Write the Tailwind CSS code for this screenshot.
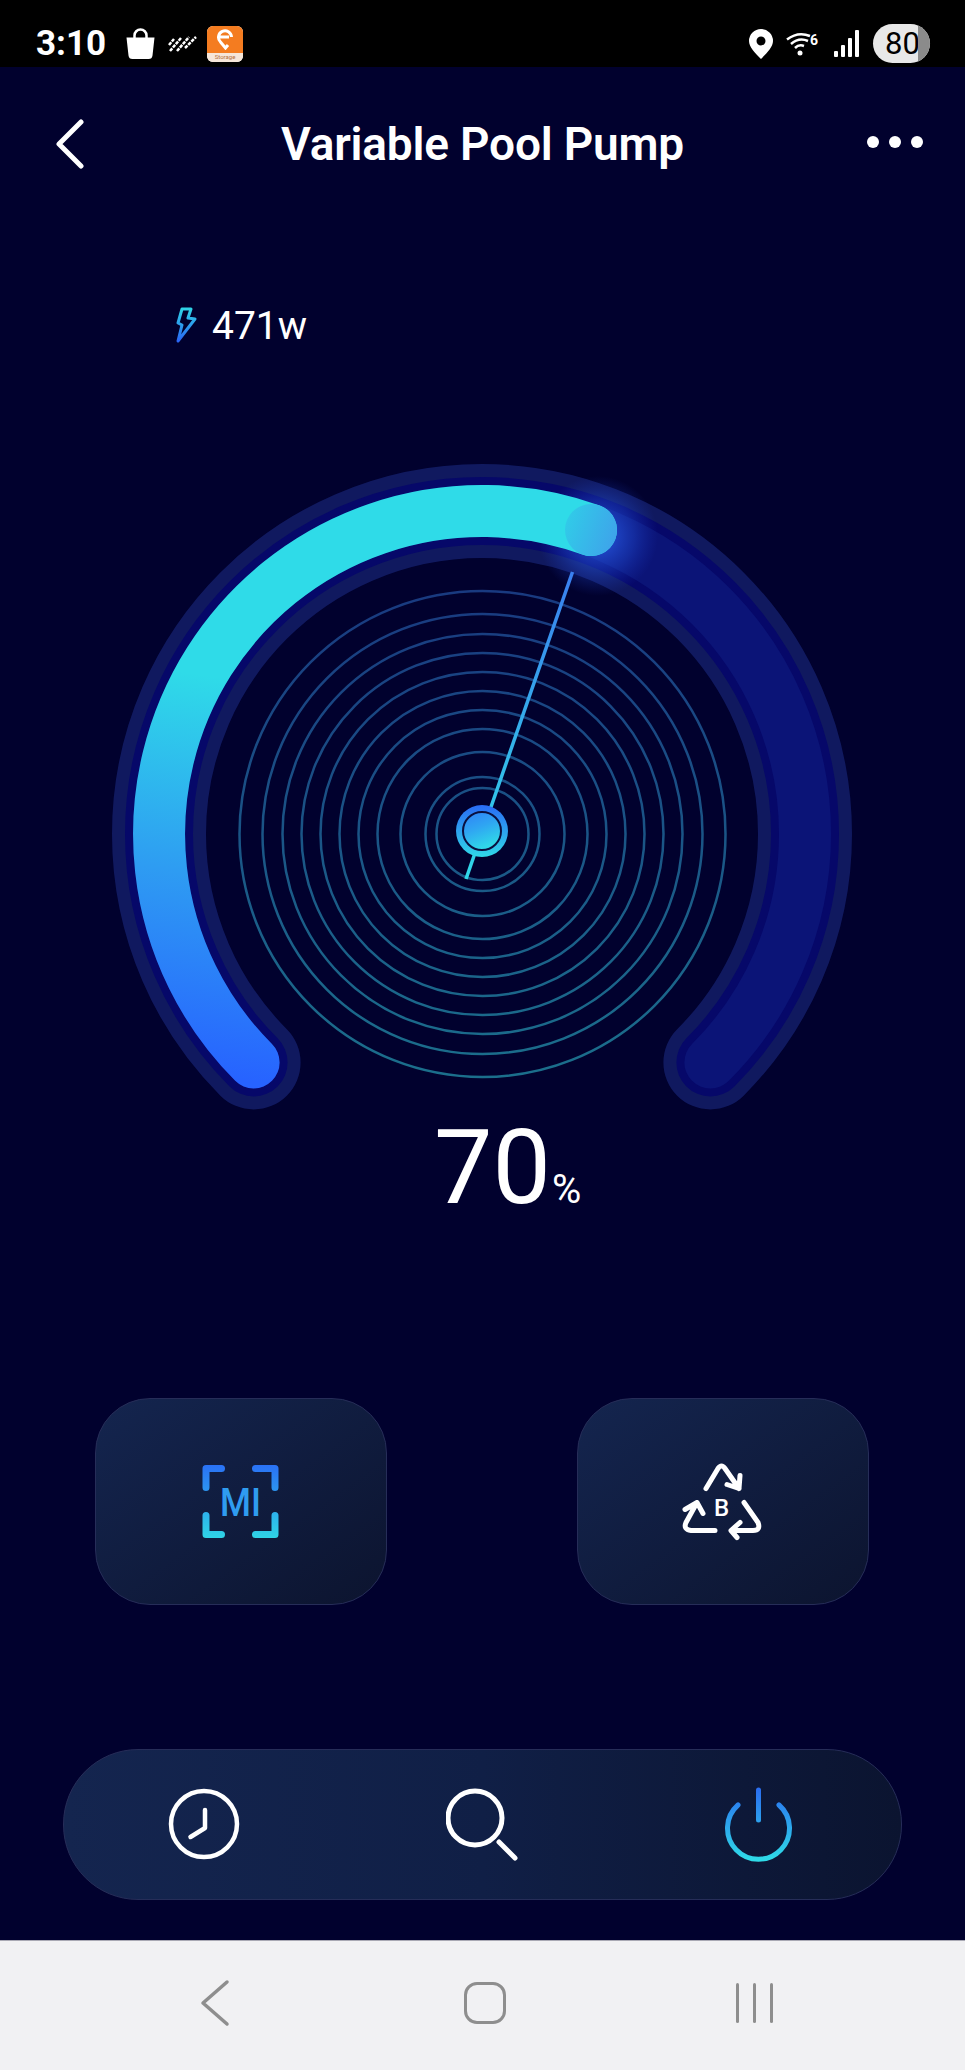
<!DOCTYPE html>
<html>
<head>
<meta charset="utf-8">
<script src="https://cdn.jsdelivr.net/npm/@tailwindcss/browser@4"></script>
</head>
<body class="bg-[#01012e]">
<div class="w-[965px] h-[2070px] overflow-hidden flex flex-col bg-[#01012e] text-white [font-family:Roboto,sans-serif]">

  <!-- status bar -->
  <div class="h-[67px] shrink-0 bg-black flex items-center pt-[20px]">
    <span class="ml-[36px] text-[35px] font-bold leading-none w-[89px]">3:10</span>
    <svg class="w-[31px] h-[32px]" viewBox="0 0 30 32"><path d="M9 10V7.500a6 6 0 0 1 12 0V10" fill="none" stroke="#fff" stroke-width="2.500"/><path d="M1 9.500h28l-2 18a4 4 0 0 1-4 3.500H7a4 4 0 0 1-4-3.500z" fill="#fff"/></svg>
    <svg class="ml-[12px] w-[30px] h-[16px]" viewBox="0 0 30 16" stroke="#fff" stroke-width="2.500" stroke-dasharray="3.500 1"><path d="M1 9 L6 3M2 15 L13 2M9 15 L21 1M17 12 L28 1"/></svg>
    <div class="ml-[9px] w-[36px] h-[36px] rounded-[6px] overflow-hidden flex flex-col bg-white">
      <div class="h-[27px] bg-[#f47c20] flex items-center justify-center">
        <svg class="w-[18px] h-[21px]" viewBox="0 0 18 21" fill="none" stroke="#fff" stroke-width="3"><path d="M3 8h10M15.500 8a6.500 6.500 0 1 0-11 5l5 6 2.500-3"/></svg>
      </div>
      <div class="flex-1 flex items-center justify-center bg-[#f6e6da]"><span class="text-[6px] leading-none text-[#b5703a]">Storage</span></div>
    </div>

    <svg class="ml-auto w-[24px] h-[30px]" viewBox="0 0 24 30"><path fill-rule="evenodd" d="M12 0a12 12 0 0 1 12 12c0 6-6 12-12 18C6 24 0 18 0 12A12 12 0 0 1 12 0zm0 7.500a4.500 4.500 0 1 0 0 9 4.500 4.500 0 0 0 0-9z" fill="#fff"/></svg>
    <svg class="ml-[13px] w-[33px] h-[25px]" viewBox="0 0 33 25" fill="none" stroke="#fff" stroke-width="2.500"><path d="M1 8.500Q12 0 24 5M5 13Q13 6 22 10M9 17Q13 13 18 15"/><circle cx="14" cy="22" r="2.500" fill="#fff" stroke="none"/><text x="24" y="14" font-size="14" font-weight="700" fill="#fff" stroke="none" font-family="Roboto, sans-serif">6</text></svg>
    <svg class="ml-[15px] w-[26px] h-[27px]" viewBox="0 0 26 27" fill="#fff"><rect x="0" y="21" width="4" height="6" rx="1"/><rect x="7" y="15" width="4" height="12" rx="1"/><rect x="14" y="8" width="4" height="19" rx="1"/><rect x="21" y="0" width="4" height="27" rx="1"/></svg>
    <div class="ml-[13px] mr-[35px] w-[57px] h-[39px] rounded-full overflow-hidden bg-[#e8e8e8] flex">
      <span class="text-black text-[31px] leading-[39px] pl-[12px] w-[45px]">80</span>
      <div class="flex-1 bg-[#8b8b8b]"></div>
    </div>
  </div>

  <!-- header -->
  <div class="h-[154px] shrink-0 grid grid-cols-[1fr_auto_1fr] items-center">
    <svg class="ml-[54px] w-[32px] h-[50px]" viewBox="0 0 32 50" fill="none" stroke="#fff" stroke-width="5" stroke-linecap="round" stroke-linejoin="round"><path d="M27 3 L5 25 L27 47"/></svg>
    <h1 class="text-[46px] font-semibold leading-none tracking-[-0.2px]">Variable Pool Pump</h1>
    <div class="flex justify-end gap-[10px] pr-[42px] pb-[5px]">
      <span class="w-[12px] h-[12px] rounded-full bg-white"></span>
      <span class="w-[12px] h-[12px] rounded-full bg-white"></span>
      <span class="w-[12px] h-[12px] rounded-full bg-white"></span>
    </div>
  </div>

  <!-- power -->
  <div class="mt-[86px] h-[36px] shrink-0 pl-[175px] flex items-center gap-[14px]">
    <svg class="w-[23px] h-[36px]" viewBox="0 0 23 36" fill="none" stroke-width="3" stroke-linejoin="round">
      <defs><linearGradient id="b" x1="0" y1="0" x2="0" y2="1"><stop offset="0" stop-color="#2fd3e6"/><stop offset="1" stop-color="#2a66f5"/></linearGradient></defs>
      <path d="M7 2h9l-3 9 7 1L3 34l4-16-4-2z" stroke="url(#b)"/>
    </svg>
    <span class="text-[39px] leading-none pt-[2px]">471w</span>
  </div>

  <!-- gauge -->
  <svg class="block shrink-0 w-[965px] h-[757px] overflow-visible" viewBox="0 343 965 757" fill="none">
    <defs>
      <linearGradient id="band" gradientUnits="userSpaceOnUse" x1="300" y1="690" x2="240" y2="1080"><stop offset="0" stop-color="#2fdbe8"/><stop offset="0.5" stop-color="#2e9cf2"/><stop offset="1" stop-color="#2763ff"/></linearGradient>
      <linearGradient id="rings" gradientUnits="userSpaceOnUse" x1="0" y1="590" x2="0" y2="1078"><stop offset="0" stop-color="#193a80"/><stop offset="1" stop-color="#1b6f8c"/></linearGradient>
      <linearGradient id="needle" gradientUnits="userSpaceOnUse" x1="572" y1="572" x2="466" y2="879"><stop offset="0" stop-color="#3a7ff0"/><stop offset="0.5" stop-color="#35aeea"/><stop offset="1" stop-color="#30d8e8"/></linearGradient>
      <linearGradient id="hub" x1="0" y1="0" x2="0" y2="1"><stop offset="0" stop-color="#2a6cf5"/><stop offset="1" stop-color="#30d8e8"/></linearGradient>
      <linearGradient id="hub2" x1="0" y1="0" x2="0.4" y2="1"><stop offset="0" stop-color="#2f80f8"/><stop offset="0.5" stop-color="#2fa6f2"/><stop offset="1" stop-color="#30d8e8"/></linearGradient>
      <linearGradient id="cap" gradientUnits="userSpaceOnUse" x1="560" y1="515" x2="617" y2="535"><stop offset="0" stop-color="#2fd0e8"/><stop offset="1" stop-color="#3ea4ea"/></linearGradient>
      <radialGradient id="glow"><stop offset="0" stop-color="#2f6cff" stop-opacity="0.8"/><stop offset="0.6" stop-color="#2456e8" stop-opacity="0.35"/><stop offset="1" stop-color="#1d3fd0" stop-opacity="0"/></radialGradient>
    </defs>
    <path d="M253.600 1062.400A323 323 0 1 1 710.400 1062.400" stroke="#10195f" stroke-width="94" stroke-linecap="round"/>
    <path d="M253.600 1062.400A323 323 0 1 1 710.400 1062.400" stroke="#060869" stroke-width="68" stroke-linecap="round"/>
    <path d="M253.600 1062.400A323 323 0 1 1 710.400 1062.400" stroke="#0b1477" stroke-width="52" stroke-linecap="round"/>
    <circle cx="598" cy="536" r="60" fill="url(#glow)"/>
    <g stroke="url(#rings)" stroke-width="2.500">
      <circle cx="482.500" cy="834" r="243"/><circle cx="482.500" cy="834" r="220"/><circle cx="482.500" cy="834" r="200"/>
      <circle cx="482.500" cy="834" r="181"/><circle cx="482.500" cy="834" r="162"/><circle cx="482.500" cy="834" r="143"/>
      <circle cx="482.500" cy="834" r="124"/><circle cx="482.500" cy="834" r="105"/><circle cx="482.500" cy="834" r="82"/>
      <circle cx="482.500" cy="834" r="57"/><circle cx="482.500" cy="834" r="46"/>
    </g>
    <path d="M253.600 1062.400A323 323 0 0 1 591 530" stroke="url(#band)" stroke-width="52" stroke-linecap="round"/>
    <circle cx="591" cy="530" r="26" fill="url(#cap)"/>
    <path d="M572.500 572L466 879" stroke="url(#needle)" stroke-width="3.500"/>
    <circle cx="482" cy="831" r="26" fill="url(#hub)"/>
    <circle cx="482" cy="831" r="19" fill="url(#hub2)" stroke="#0a1040" stroke-width="2"/>
  </svg>

  <!-- percent -->
  <div class="mt-[16px] h-[100px] shrink-0 pl-[434px] flex items-baseline">
    <span class="text-[104px] leading-none">70</span>
    <span class="text-[40px] leading-none ml-[1px]">%</span>
  </div>

  <!-- mode buttons -->
  <div class="mt-[182px] h-[207px] shrink-0 flex justify-between pl-[95px] pr-[96px]">
    <div class="w-[292px] h-[207px] rounded-[55px] border border-[#262d58] bg-gradient-to-br from-[#14254f] to-[#0c142f] flex items-center justify-center">
      <svg class="w-[100px] h-[100px]" viewBox="191.500 1451.500 100 100" fill="none">
        <defs><linearGradient id="mi" gradientUnits="userSpaceOnUse" x1="0" y1="1465" x2="0" y2="1537"><stop offset="0" stop-color="#2a72f5"/><stop offset="1" stop-color="#2fd3e6"/></linearGradient></defs>
        <path d="M206.500 1487V1468H222M256 1468H275.500V1487M206.500 1515V1534H222M256 1534H275.500V1515" stroke="url(#mi)" stroke-width="7" stroke-linecap="round" stroke-linejoin="round"/>
        <text x="220.500" y="1515" font-size="39" font-weight="500" textLength="41" lengthAdjust="spacingAndGlyphs" fill="#2f9cf0" font-family="Roboto, sans-serif">MI</text>
      </svg>
    </div>
    <div class="w-[292px] h-[207px] rounded-[55px] border border-[#262d58] bg-gradient-to-br from-[#14254f] to-[#0c142f] flex items-center justify-center">
      <svg class="w-[100px] h-[100px]" viewBox="674 1451.500 100 100" fill="none" stroke="#fff" stroke-width="5" stroke-linecap="round" stroke-linejoin="round">
        <path d="M707 1488L719 1468Q722.500 1463 726 1468L740 1488M741 1475L740 1488L728 1484"/>
        <path d="M716 1530H692Q684 1529 687 1522L698 1502M686 1509L698 1502L704 1513"/>
        <path d="M745 1502L759 1522Q762 1530 754 1530H732M741 1522L732 1530L738 1537"/>
        <text x="722.500" y="1515" font-size="24" font-weight="500" fill="#fff" stroke="none" text-anchor="middle" font-family="Roboto, sans-serif">B</text>
      </svg>
    </div>
  </div>

  <!-- action bar -->
  <div class="mt-[144px] mx-[63px] h-[151px] shrink-0 rounded-[75px] border border-[#262d58] bg-gradient-to-r from-[#14254f] via-[#101f46] to-[#0b1430] flex items-center justify-between pl-[100px] pr-[103px]">
    <svg class="w-[80px] h-[80px]" viewBox="164 1785 80 80" fill="none" stroke="#fff" stroke-width="4.500" stroke-linecap="round" stroke-linejoin="round"><circle cx="204" cy="1824" r="33"/><path d="M205 1810V1828L190.500 1837"/></svg>
    <svg class="ml-[10px] w-[80px] h-[80px]" viewBox="446 1785 80 80" fill="none" stroke="#fff" stroke-width="5" stroke-linecap="round"><circle cx="475" cy="1818" r="27"/><path d="M499 1842L515 1858" /></svg>
    <svg class="w-[80px] h-[80px]" viewBox="717 1785 80 80" fill="none" stroke-width="5" stroke-linecap="round">
      <defs><linearGradient id="pw" gradientUnits="userSpaceOnUse" x1="0" y1="1789" x2="0" y2="1860"><stop offset="0" stop-color="#2a6ef0"/><stop offset="1" stop-color="#2fdbe8"/></linearGradient></defs>
      <path d="M757.500 1790V1820" stroke="url(#pw)"/>
      <path d="M737 1805A31 31 0 1 0 778 1805" stroke="url(#pw)"/>
    </svg>
  </div>

  <!-- system nav -->
  <div class="mt-[40px] h-[130px] shrink-0 bg-[#f1f1f3] border-t border-[#a9a9b4] flex items-center pb-[5px]">
    <svg class="ml-[197px] w-[36px] h-[48px]" viewBox="0 0 36 48" fill="none" stroke="#8e8e8e" stroke-width="3.500" stroke-linecap="round" stroke-linejoin="round"><path d="M30 3L6 24L30 45"/></svg>
    <div class="ml-[231px] w-[42px] h-[42px] rounded-[13px] border-[3.500px] border-[#8e8e8e]"></div>
    <div class="ml-[230px] flex gap-[14px]">
      <span class="w-[3px] h-[40px] bg-[#8e8e8e] rounded-full"></span>
      <span class="w-[3px] h-[40px] bg-[#8e8e8e] rounded-full"></span>
      <span class="w-[3px] h-[40px] bg-[#8e8e8e] rounded-full"></span>
    </div>
  </div>
</div>
</body>
</html>
